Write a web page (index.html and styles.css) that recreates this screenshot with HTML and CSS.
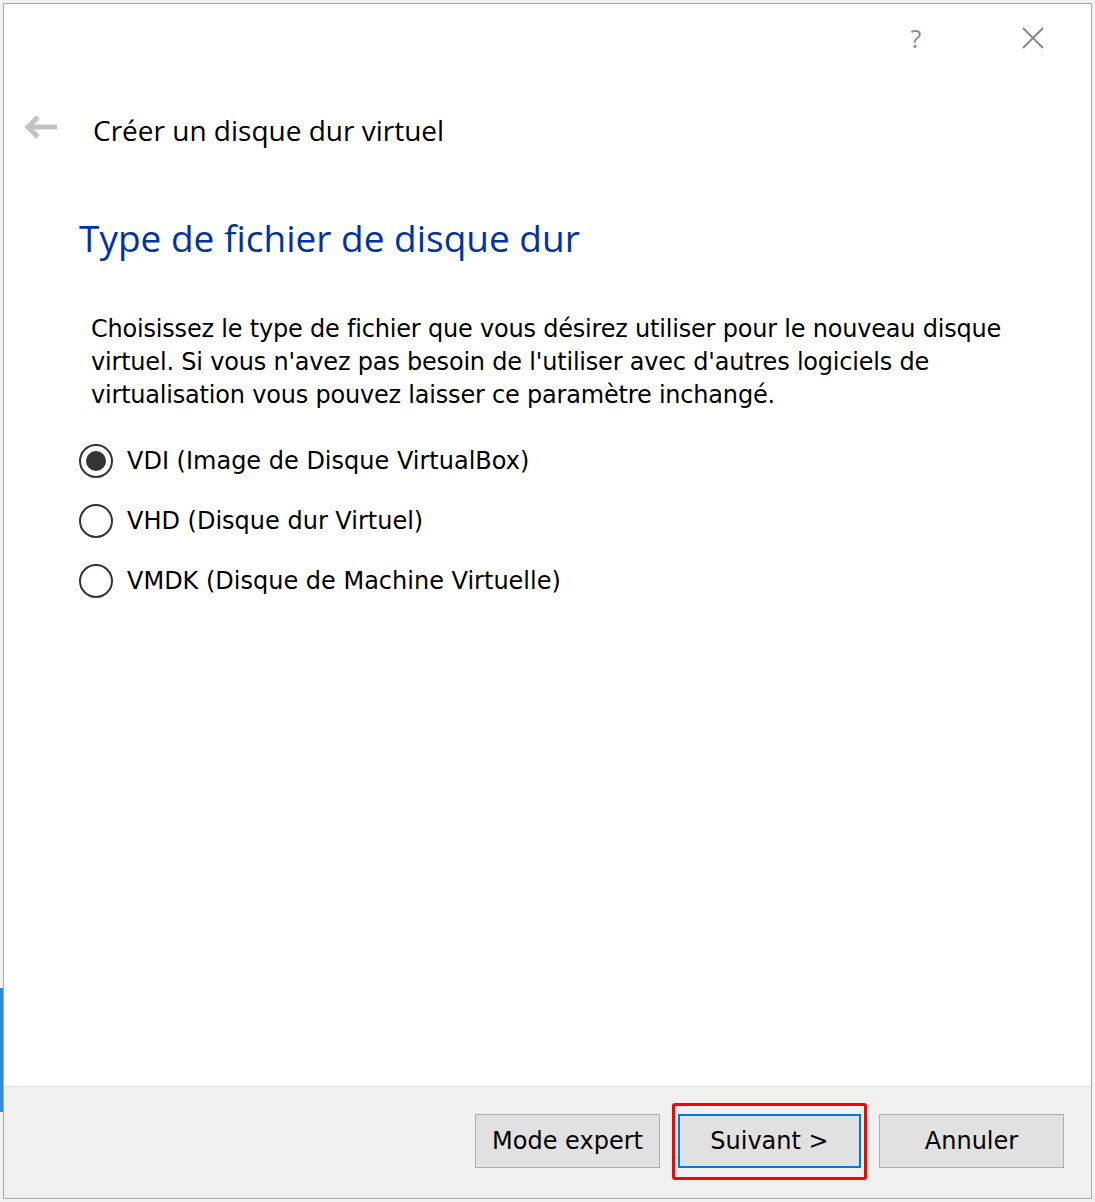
FILE: index.html
```html
<!DOCTYPE html>
<html lang="fr">
<head>
<meta charset="utf-8">
<title>Créer un disque dur virtuel</title>
<link rel="stylesheet" href="styles.css">
</head>
<body>
<div class="window">
  <div class="titlebar">
    <div class="tb-btn help">?</div>
    <div class="tb-btn close">
      <svg width="24" height="24" viewBox="0 0 24 24"><path d="M2 2 L22 22 M22 2 L2 22" stroke="#8a8a8a" stroke-width="2" fill="none"/></svg>
    </div>
  </div>
  <div class="header">
    <svg class="back" width="34" height="24" viewBox="0 0 34 24"><path d="M4 12 H33 M14 2 L4 12 L14 22" stroke="#c3c3c3" stroke-width="5" fill="none"/></svg>
    <span class="header-title">Créer un disque dur virtuel</span>
  </div>
  <div class="content">
    <h1 class="page-title">Type de fichier de disque dur</h1>
    <p class="desc">Choisissez le type de fichier que vous désirez utiliser pour le nouveau disque<br>virtuel. Si vous n'avez pas besoin de l'utiliser avec d'autres logiciels de<br>virtualisation vous pouvez laisser ce paramètre inchangé.</p>
    <div class="options">
      <div class="option"><span class="radio checked"></span><span class="label">VDI (Image de Disque VirtualBox)</span></div>
      <div class="option"><span class="radio"></span><span class="label">VHD (Disque dur Virtuel)</span></div>
      <div class="option"><span class="radio"></span><span class="label">VMDK (Disque de Machine Virtuelle)</span></div>
    </div>
  </div>
  <div class="footer">
    <div class="btn">Mode expert</div>
    <div class="btn default">Suivant &gt;<span class="highlight"></span></div>
    <div class="btn">Annuler</div>
  </div>
</div>
</body>
</html>
```

FILE: styles.css
```css
html, body {
  margin: 0;
  padding: 0;
}
body {
  width: 1095px;
  height: 1202px;
  overflow: hidden;
  background: linear-gradient(#2d8be0, #2d8be0) no-repeat 0 988px / 4px 124px, #f2f2f2;
  padding: 3px 3px 0 3px;
  box-sizing: border-box;
}
.window {
  box-sizing: border-box;
  width: 1089px;
  height: 1196px;
  border: 1px solid #a9a9a9;
  background: #fff;
  display: flex;
  flex-direction: column;
}
.titlebar {
  height: 70px;
  display: flex;
  justify-content: flex-end;
}
.tb-btn {
  width: 116px;
  height: 68px;
  display: flex;
  align-items: center;
  justify-content: center;
}
.help {
  font-family: "Open Sans", "Noto Sans", sans-serif;
  font-size: 25px;
  color: #8a8a8a;
  margin-right: 1px;
}
.close svg { display: block; }
.header {
  height: 106px;
  display: flex;
  align-items: center;
  padding-left: 20px;
}
.back {
  display: block;
}
.header-title {
  margin-left: 35px;
  padding-top: 6px;
  font-family: "Open Sans", "Noto Sans", sans-serif;
  font-size: 28px;
  color: #000;
}
.content {
  flex: 1;
  padding-left: 75px;
}
.page-title {
  margin: 33px 0 0 0;
  font-family: "Open Sans", "Noto Sans", sans-serif;
  font-weight: 400;
  font-size: 37px;
  line-height: 50px;
  color: #0033a0;
}
.desc {
  margin: 50px 0 0 12px;
  font-family: "DejaVu Sans", sans-serif;
  font-size: 24px;
  line-height: 33px;
  letter-spacing: -0.2px;
  color: #000;
  white-space: nowrap;
}
.options {
  margin-top: 32px;
  display: flex;
  flex-direction: column;
  gap: 26px;
}
.option {
  display: flex;
  align-items: center;
  height: 34px;
}
.radio {
  box-sizing: border-box;
  width: 34px;
  height: 34px;
  border: 2px solid #333;
  border-radius: 50%;
  background: #fff;
  display: flex;
  align-items: center;
  justify-content: center;
}
.radio.checked::after {
  content: "";
  width: 20px;
  height: 20px;
  border-radius: 50%;
  background: #333;
}
.label {
  margin-left: 14px;
  font-family: "DejaVu Sans", sans-serif;
  font-size: 24px;
  color: #000;
}
.footer {
  height: 112px;
  background: #f0f0f0;
  border-top: 1px solid #dfdfdf;
  display: flex;
  align-items: center;
  justify-content: flex-end;
  gap: 18px;
  padding-right: 27px;
  padding-bottom: 4px;
  box-sizing: border-box;
}
.btn {
  position: relative;
  box-sizing: border-box;
  width: 185px;
  height: 54px;
  border: 1px solid #adadad;
  background: #e1e1e1;
  display: flex;
  align-items: center;
  justify-content: center;
  font-family: "DejaVu Sans", sans-serif;
  font-size: 24px;
  color: #000;
}
.btn.default {
  width: 183px;
  border: 2px solid #0078d7;
}
.highlight {
  position: absolute;
  left: -8px;
  right: -8px;
  top: -13px;
  bottom: -14px;
  border: 3px solid #f00;
  border-radius: 3px;
  pointer-events: none;
}
```
